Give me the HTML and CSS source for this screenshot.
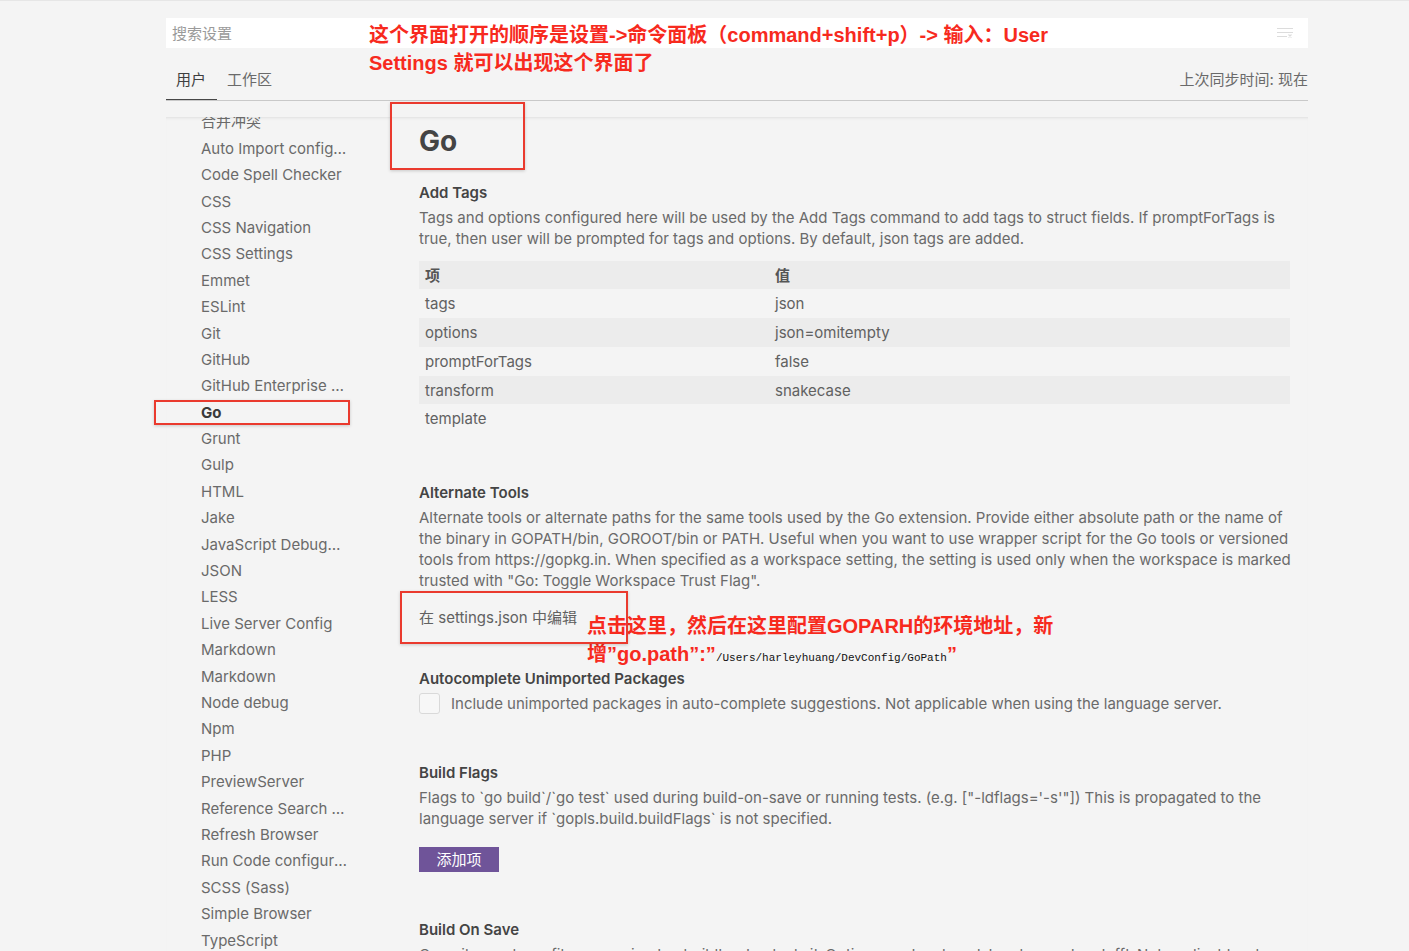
FILE: index.html
```html
<!DOCTYPE html>
<html lang="zh">
<head>
<meta charset="utf-8">
<title>Settings</title>
<link rel="stylesheet" href="styles.css">
</head>
<body>
<div class="page">
  <header class="top">
    <div class="search">
      <span class="placeholder">搜索设置</span>
      <svg class="clear-icon" width="18" height="12" viewBox="0 0 18 12">
        <path d="M1 1.5h16M1 5.5h16M1 9.5h10" stroke="#dcdcdc" stroke-width="1.2" fill="none"/>
        <path d="M12.5 7.5l3 3M15.5 7.5l-3 3" stroke="#dcdcdc" stroke-width="1.1" fill="none"/>
      </svg>
    </div>
    <div class="tabs-row">
      <div class="tabs">
        <span class="tab active">用户</span>
        <span class="tab">工作区</span>
      </div>
      <span class="sync">上次同步时间: 现在</span>
    </div>
  </header>

  <div class="body">
    <nav class="toc">
      <ul class="toc-list">
        <li>合并冲突</li>
        <li>Auto Import configuration</li>
        <li>Code Spell Checker</li>
        <li>CSS</li>
        <li>CSS Navigation</li>
        <li>CSS Settings</li>
        <li>Emmet</li>
        <li>ESLint</li>
        <li>Git</li>
        <li>GitHub</li>
        <li>GitHub Enterprise Server</li>
        <li class="selected">Go</li>
        <li>Grunt</li>
        <li>Gulp</li>
        <li>HTML</li>
        <li>Jake</li>
        <li>JavaScript Debugger</li>
        <li>JSON</li>
        <li>LESS</li>
        <li>Live Server Config</li>
        <li>Markdown</li>
        <li>Markdown</li>
        <li>Node debug</li>
        <li>Npm</li>
        <li>PHP</li>
        <li>PreviewServer</li>
        <li>Reference Search View</li>
        <li>Refresh Browser</li>
        <li>Run Code configuration</li>
        <li>SCSS (Sass)</li>
        <li>Simple Browser</li>
        <li>TypeScript</li>
      </ul>
    </nav>

    <main class="content">
      <h1 class="group-title">Go</h1>

      <section class="setting">
        <h2 class="setting-title">Add Tags</h2>
        <p class="setting-desc">Tags and options configured here will be used by the Add Tags command to add tags to struct fields. If promptForTags is true, then user will be prompted for tags and options. By default, json tags are added.</p>
        <div class="kv-table">
          <div class="kv-row head"><span class="k">项</span><span class="v">值</span></div>
          <div class="kv-row"><span class="k">tags</span><span class="v">json</span></div>
          <div class="kv-row shade"><span class="k">options</span><span class="v">json=omitempty</span></div>
          <div class="kv-row"><span class="k">promptForTags</span><span class="v">false</span></div>
          <div class="kv-row shade"><span class="k">transform</span><span class="v">snakecase</span></div>
          <div class="kv-row"><span class="k">template</span><span class="v"></span></div>
        </div>
      </section>

      <section class="setting setting-link">
        <h2 class="setting-title">Alternate Tools</h2>
        <p class="setting-desc">Alternate tools or alternate paths for the same tools used by the Go extension. Provide either absolute path or the name of the binary in GOPATH/bin, GOROOT/bin or PATH. Useful when you want to use wrapper script for the Go tools or versioned tools from https://gopkg.in. When specified as a workspace setting, the setting is used only when the workspace is marked trusted with "Go: Toggle Workspace Trust Flag".</p>
        <a class="edit-link">在 settings.json 中编辑</a>
      </section>

      <section class="setting setting-check">
        <h2 class="setting-title">Autocomplete Unimported Packages</h2>
        <label class="check-row"><span class="checkbox"></span><span class="check-text">Include unimported packages in auto-complete suggestions. Not applicable when using the language server.</span></label>
      </section>

      <section class="setting">
        <h2 class="setting-title">Build Flags</h2>
        <p class="setting-desc">Flags to `go build`/`go test` used during build-on-save or running tests. (e.g. ["-ldflags='-s'"]) This is propagated to the language server if `gopls.build.buildFlags` is not specified.</p>
        <button class="add-btn">添加项</button>
      </section>

      <section class="setting">
        <h2 class="setting-title">Build On Save</h2>
        <p class="setting-desc">Compiles code on file save using 'go build' or 'go test -i'. Options are 'package', 'workspace', or 'off'. Not applicable when using the language server.</p>
      </section>
    </main>
  </div>

  <div class="note note-top">这个界面打开的顺序是设置-&gt;命令面板（command+shift+p）-&gt; 输入：User<br>Settings 就可以出现这个界面了</div>
  <div class="note note-mid">点击这里，然后在这里配置GOPARH的环境地址，新<br>增”go.path”:”<span class="note-path">/Users/harleyhuang/DevConfig/GoPath</span>”</div>
  <div class="mark mark-go-title"></div>
  <div class="mark mark-go-toc"></div>
  <div class="mark mark-edit"></div>
</div>
</body>
</html>
```

FILE: styles.css
```css
* { box-sizing: border-box; }

html, body {
  margin: 0;
  padding: 0;
  height: 100%;
}

body {
  background: #f4f4f4;
  font-family: Inter, "Noto Sans CJK SC", sans-serif;
  font-size: 15px;
  color: #6a6a6a;
  overflow: hidden;
}

.page {
  position: relative;
  height: 951px;
  padding-left: 166px;
  border-top: 1px solid #e6e6e6;
}

.top {
  width: 1142px;
  padding-top: 17px;
}

.search {
  height: 30px;
  background: #ffffff;
  display: flex;
  align-items: center;
  justify-content: space-between;
  padding: 0 14px 1px 6px;
}

.placeholder {
  color: #9a9a9a;
  font-size: 15px;
}

.clear-icon { display: block; }

.tabs-row {
  height: 53px;
  display: flex;
  align-items: flex-end;
  justify-content: space-between;
  border-bottom: 1px solid #c9c9c9;
}

.tabs { display: flex; }

.tab {
  line-height: 21px;
  padding: 0 11px 9px 10px;
  color: #6a6a6a;
  border-bottom: 1px solid transparent;
}

.tab.active {
  color: #3f3f3f;
  border-bottom-color: #474747;
}

.sync {
  line-height: 21px;
  padding-bottom: 10px;
  color: #6a6a6a;
}

.body {
  display: flex;
  width: 1142px;
  margin-top: 16px;
  height: 834px;
  overflow: hidden;
  position: relative;
  box-shadow: inset 0 3px 3px -2px #dfdfdf;
}

.toc {
  width: 190px;
  flex: none;
}

.toc-list {
  list-style: none;
  margin: -7.6px 0 0;
  padding: 0;
}

.toc-list li {
  height: 26.4px;
  line-height: 26.4px;
  padding: 0 8px 0 35px;
  white-space: nowrap;
  overflow: hidden;
  text-overflow: ellipsis;
  color: #6a6a6a;
}

.toc-list li.selected {
  font-weight: 700;
  color: #3a3a3a;
}

.content {
  margin-left: 63px;
  width: 880px;
  flex: none;
  padding-top: 7px;
}

.group-title {
  margin: 0;
  font-size: 28px;
  line-height: 34px;
  font-weight: 700;
  color: #444444;
}

.setting {
  padding-bottom: 47px;
}

.setting-link { padding-bottom: 40px; }
.setting-check { padding-bottom: 48px; }

.group-title + .setting { padding-top: 24px; }

.setting-title {
  margin: 0 0 4px;
  font-size: 15px;
  line-height: 21px;
  font-weight: 600;
  color: #444444;
}

.setting-desc {
  margin: 0;
  line-height: 21px;
  color: #6a6a6a;
}

.kv-table {
  margin-top: 11.5px;
  margin-bottom: 2px;
  width: 871px;
}

.kv-row {
  display: flex;
  height: 28.8px;
  align-items: center;
  padding-left: 6px;
  color: #616161;
}

.kv-row.head,
.kv-row.shade {
  background: #ececec;
}

.kv-row.head { font-weight: 700; color: #555555; }

.kv-row .k { width: 350px; }

.edit-link {
  display: inline-block;
  margin-top: 16px;
  line-height: 21px;
  color: #616161;
  cursor: pointer;
}

.check-row {
  display: flex;
  align-items: center;
  margin-top: 4px;
  gap: 11px;
}

.checkbox {
  width: 21px;
  height: 21px;
  border: 1px solid #d9d9d9;
  border-radius: 3px;
  background: #f7f7f7;
  flex: none;
}

.check-text {
  line-height: 21px;
  color: #6a6a6a;
}

.add-btn {
  display: block;
  margin-top: 18px;
  width: 80px;
  height: 25px;
  border: 0;
  padding: 0;
  background: #6f5499;
  color: #ffffff;
  font-family: Inter, "Noto Sans CJK SC", sans-serif;
  font-size: 15px;
  line-height: 25px;
}

/* annotations */
.note {
  position: absolute;
  color: #f72a1e;
  font-family: "Liberation Sans", "Noto Sans CJK SC", sans-serif;
  font-weight: 700;
  font-size: 20px;
  line-height: 28px;
  white-space: nowrap;
}

.note-top { left: 369px; top: 20px; }
.note-mid { left: 587px; top: 611px; }

.note-path {
  font-family: "Liberation Mono", monospace;
  font-weight: 400;
  font-size: 11px;
  color: #111111;
}

.mark {
  position: absolute;
  border: 2px solid #ea3a2e;
  box-shadow: 0 1px 3px rgba(0, 0, 0, 0.18);
}

.mark-go-title { left: 390px; top: 101px; width: 135px; height: 68px; }
.mark-go-toc { left: 154px; top: 399px; width: 196px; height: 25px; }
.mark-edit { left: 400px; top: 590px; width: 228px; height: 53px; }
```
